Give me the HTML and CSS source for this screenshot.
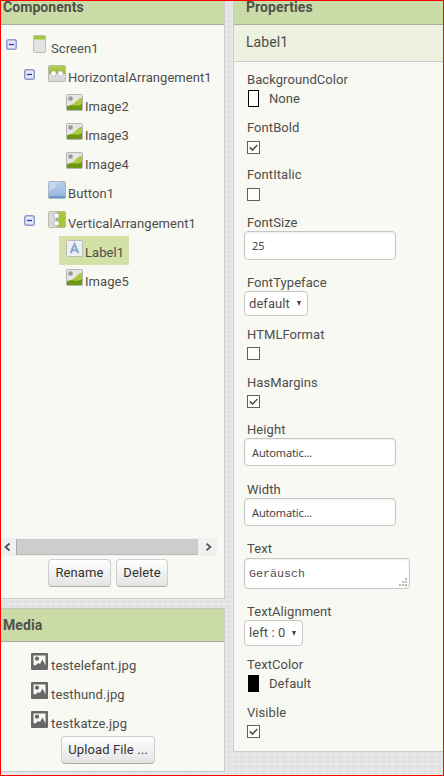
FILE: index.html
```html
<!DOCTYPE html>
<html lang="en">
<head>
<meta charset="utf-8">
<title>Designer</title>
<link rel="stylesheet" href="styles.css">
</head>
<body>
<svg class="defs" width="0" height="0">
  <defs>
    <linearGradient id="grey" x2="0" y2="1"><stop stop-color="#f4f4f4"/><stop offset="1" stop-color="#d5d5d5"/></linearGradient>
    <linearGradient id="green" x2="0" y2="1"><stop stop-color="#b0d050"/><stop offset="1" stop-color="#96bd31"/></linearGradient>
    <linearGradient id="blue" x2="0" y2="1"><stop stop-color="#b9cfea"/><stop offset="1" stop-color="#91b3dd"/></linearGradient>
    <symbol id="toggle" viewBox="0 0 11 11"><rect x=".75" y=".75" width="9.5" height="9.5" rx="2" fill="#e6e9fa" stroke="#8c99ca" stroke-width="1.5"/><path d="M3 5.500h5" stroke="#3030c0" stroke-width="1.300"/></symbol>
    <symbol id="screen" viewBox="0 0 13 18"><rect x=".5" y=".5" width="12" height="17" rx="1" fill="#e3e3e3" stroke="#bdbdbd"/><path d="M1 1h11v3.500H1z" fill="#a5c83c"/></symbol>
    <symbol id="horizontal" viewBox="0 0 18 17"><rect x=".5" y=".5" width="17" height="16" rx="1" fill="url(#grey)" stroke="#b9bcae"/><path d="M1 1h16v8H1z" fill="url(#green)"/><path d="M8 8.500h2" stroke="#aaa"/><rect x="3" y="6" width="5" height="5" rx="1.800" fill="#fff" stroke="#b4b8a6" stroke-width=".8"/><rect x="10" y="6" width="5" height="5" rx="1.800" fill="#fff" stroke="#b4b8a6" stroke-width=".8"/></symbol>
    <symbol id="vertical" viewBox="0 0 18 17"><rect x=".5" y=".5" width="17" height="16" rx="1" fill="#d9d9d9" stroke="#b9bcae"/><path d="M9 1h8v15H9z" fill="#a4c83a"/><path d="M8.500 7v3" stroke="#aaa"/><rect x="6" y="2.500" width="5" height="4.500" rx="1.300" fill="#fff" stroke="#aaa" stroke-width=".8"/><rect x="6" y="10" width="5" height="4.500" rx="1.300" fill="#fff" stroke="#aaa" stroke-width=".8"/></symbol>
    <symbol id="image" viewBox="0 0 17 17"><rect x=".5" y=".5" width="16" height="16" rx="1" fill="#e6e6e6" stroke="#b5b5b5"/><path d="M1 12Q7 11 10 7.500T16 3.500V16H1z" fill="#a8ca3e"/><path d="M1 12.500Q5 10.500 9 11.500T16 10V16H1z" fill="#6d9a12"/><circle cx="4.500" cy="4.500" r="2.300" fill="#999"/></symbol>
    <symbol id="button" viewBox="0 0 18 18"><rect x=".5" y=".5" width="17" height="17" rx="1" fill="url(#blue)" stroke="#a9b5c8"/><path d="M1 1h9Q9 8 1 10z" fill="#d8e5f5" opacity=".5"/><path d="M1 15h16v2H1z" fill="#7397c9"/></symbol>
    <symbol id="label" viewBox="0 0 17 17"><rect x=".5" y=".5" width="16" height="16" rx="1" fill="#efefef" stroke="#bcbcbc"/><path d="M4.700 13L8.500 4l3.800 9M6 10.300h5" fill="none" stroke="#88aad6" stroke-width="2"/></symbol>
    <symbol id="media" viewBox="0 0 17 17"><rect width="17" height="17" rx="1" fill="#686868"/><path d="M2.500 2.500h12v10l-3-6-2.500 4.500-2-1-2.500 2.500-2-.5z" fill="#f8f9f3"/><circle cx="6" cy="5.700" r="2.100" fill="#686868"/></symbol>
    <symbol id="tick" viewBox="0 0 13 13"><path d="M2.800 6.400l2.700 2.700 4.900-5.200" fill="none" stroke="#505050" stroke-width="1.500"/></symbol>
  </defs>
</svg>
<div class="app">
  <div class="left">
    <section class="panel components">
      <h2>Components</h2>
      <div class="tree">
        <div class="row l0"><svg class="toggle"><use href="#toggle"/></svg><span class="item"><svg class="screen"><use href="#screen"/></svg><span>Screen1</span></span></div>
        <div class="row l1"><svg class="toggle"><use href="#toggle"/></svg><span class="item"><svg class="wide"><use href="#horizontal"/></svg><span>HorizontalArrangement1</span></span></div>
        <div class="row l2"><span class="item"><svg><use href="#image"/></svg><span>Image2</span></span></div>
        <div class="row l2"><span class="item"><svg><use href="#image"/></svg><span>Image3</span></span></div>
        <div class="row l2"><span class="item"><svg><use href="#image"/></svg><span>Image4</span></span></div>
        <div class="row l1 leaf"><span class="item"><svg class="wide tall"><use href="#button"/></svg><span>Button1</span></span></div>
        <div class="row l1"><svg class="toggle"><use href="#toggle"/></svg><span class="item"><svg class="wide"><use href="#vertical"/></svg><span>VerticalArrangement1</span></span></div>
        <div class="row l2"><span class="item selected"><svg><use href="#label"/></svg><span>Label1</span></span></div>
        <div class="row l2"><span class="item"><svg><use href="#image"/></svg><span>Image5</span></span></div>
      </div>
      <div class="scrollbar"><svg class="arrow" viewBox="0 0 15 16"><path d="M8.500 4.500L4.500 8l4 3.500" /></svg><div class="thumb"></div><svg class="arrow end" viewBox="0 0 20 16"><path d="M9 4.500L13 8l-4 3.500" /></svg></div>
      <div class="actions"><button class="rename">Rename</button><button class="delete">Delete</button></div>
    </section>
    <section class="panel media">
      <h2>Media</h2>
      <div class="files">
        <div class="file"><svg><use href="#media"/></svg><span>testelefant.jpg</span></div>
        <div class="file"><svg><use href="#media"/></svg><span>testhund.jpg</span></div>
        <div class="file"><svg><use href="#media"/></svg><span>testkatze.jpg</span></div>
      </div>
      <button class="upload">Upload File ...</button>
    </section>
  </div>
  <section class="panel properties">
    <h2>Properties</h2>
    <div class="subject">Label1</div>
    <div class="props">
      <div class="prop h48"><label>BackgroundColor</label><div class="color"><i class="swatch"></i>None</div></div>
      <div class="prop h47"><label>FontBold</label><div class="check low"><svg><use href="#tick"/></svg></div></div>
      <div class="prop h48"><label>FontItalic</label><div class="check low"></div></div>
      <div class="prop h60"><label>FontSize</label><div class="field size">25</div></div>
      <div class="prop h52"><label>FontTypeface</label><div class="select">default<i class="caret"></i></div></div>
      <div class="prop h48"><label>HTMLFormat</label><div class="check"></div></div>
      <div class="prop h47"><label>HasMargins</label><div class="check"><svg><use href="#tick"/></svg></div></div>
      <div class="prop h60"><label>Height</label><div class="field">Automatic...</div></div>
      <div class="prop h59"><label>Width</label><div class="field">Automatic...</div></div>
      <div class="prop h63"><label>Text</label><div class="area">Geräusch<svg class="grip" viewBox="0 0 9 9"><path d="M6 0h2v2H6zM3 3h2v2H3zM6 3h2v2H6zM0 6h2v2H0zM3 6h2v2H3zM6 6h2v2H6z"/></svg></div></div>
      <div class="prop h53"><label>TextAlignment</label><div class="select align">left : 0<i class="caret"></i></div></div>
      <div class="prop h48"><label>TextColor</label><div class="color"><i class="swatch black"></i>Default</div></div>
      <div class="prop"><label>Visible</label><div class="check"><svg><use href="#tick"/></svg></div></div>
    </div>
  </section>
</div>
</body>
</html>
```
FILE: styles.css
```css
* { box-sizing: border-box; }
body {
  margin: 0;
  font: 13px/16px Roboto, sans-serif;
  letter-spacing: .07px;
  color: #4d4d4d;
}
.defs { display: block; }
svg { display: block; flex: none; }
.app {
  width: 444px;
  height: 776px;
  overflow: hidden;
  border: 1px solid #f00;
  display: flex;
  align-items: flex-start;
  gap: 8px;
  background:
    repeating-linear-gradient(90deg, rgba(255,255,255,.2) 0 1px, transparent 1px 3px, rgba(0,0,0,.015) 3px 4px, transparent 4px 7px),
    repeating-linear-gradient(0deg, rgba(255,255,255,.2) 0 1px, transparent 1px 3px, rgba(0,0,0,.015) 3px 4px, transparent 4px 5px),
    #e4e4e4;
}
.left { width: 224px; flex: none; }
.panel { background: #f8f9f3; border: 1px solid #ccc; border-left: 0; }
h2 {
  margin: 0;
  height: 33px;
  padding-left: 2px;
  font-size: 14px;
  line-height: 32px;
  font-weight: 700;
  color: #4f514b;
  background: #cbdba8;
  border-bottom: 1px solid #aaaea2;
}
.components { height: 598px; border-top: 0; }
.components h2, .properties h2 { height: 24px; line-height: 13px; }
.tree { height: 513px; padding-top: 7px; }
.row { display: flex; align-items: flex-start; height: 29.1px; }
.toggle { width: 11px; height: 11px; margin-top: 7px; }
.l1 .toggle { margin-top: 8px; }
.l0 { padding-left: 5px; }
.l1 { padding-left: 23px; }
.l1.leaf { padding-left: 47px; }
.l2 { padding-left: 58px; }
.item { display: flex; height: 29px; padding-top: 4px; }
.item svg { width: 17px; height: 17px; }
.item .wide { width: 18px; }
.item .tall { height: 18px; }
.item .screen { width: 13px; height: 18px; margin-right: 3px; }
.item span { margin: 5px 0 0 2px; }
.l0 .item { padding-left: 16px; padding-top: 3px; }
.l0 .item span { margin-top: 6px; }
.l1 .item { padding-left: 13px; }
.l1.leaf .item { padding-left: 0; }
.l1 .item span { margin-left: 2px; }
.l2 .item { padding-left: 7px; padding-right: 5px; }
.selected { width: 70px; background: #d3e0a6; }
.scrollbar { display: flex; width: 216px; height: 18px; padding: 1px 0; background: #f0f0f0; }
.thumb { width: 182px; background: #cdcdcd; border-left: 1px solid #aaa; border-bottom: 1px solid #bbb; }
.arrow { width: 15px; height: 16px; fill: none; stroke: #505050; stroke-width: 1.8; }
.arrow.end { width: 19px; }
.actions { display: flex; gap: 5px; padding: 3px 0 0 47px; }
button {
  display: block;
  height: 28px;
  padding: 0;
  font: 13px/26px Roboto, sans-serif;
  letter-spacing: .12px;
  color: #333;
  background: linear-gradient(#fff, #e4e4e4);
  border: 1px solid #ccc;
  border-bottom-color: #aaa;
  border-radius: 4px;
}
.rename { width: 63px; }
.delete { width: 52px; }
.media { height: 164px; margin-top: 9px; border-top-color: #c4c8bb; }
.files { padding: 11px 0 0 30px; }
.file { display: flex; gap: 3px; height: 29px; }
.file svg { width: 17px; height: 17px; }
.file span { margin-top: 5px; letter-spacing: .14px; }
.upload { width: 94px; margin: -4px 0 0 60px; }
.properties { width: 211px; height: 751px; flex: none; border-top: 0; border-right: 0; border-left: 1px solid #ccc; }
.properties h2 { padding-left: 12px; }
.subject {
  height: 37px;
  padding-left: 12px;
  font-size: 14px;
  line-height: 35px;
  background: #edf1df;
  border-bottom: 1px solid #ccc;
}
.props { padding: 10px 0 0 10px; }
label { display: block; height: 16px; padding-left: 3px; line-height: 16px; }
.h47 { height: 47px; }
.h48 { height: 48px; }
.h52 { height: 52px; }
.h53 { height: 53px; }
.h59 { height: 59px; }
.h60 { height: 60px; }
.h63 { height: 63px; }
.color { display: flex; gap: 10px; padding: 2px 0 0 4px; line-height: 18px; }
.swatch { width: 11px; height: 17px; background: #fff; border: 1px solid #000; }
.swatch.black { background: #000; }
.check { width: 13px; height: 13px; margin: 4px 0 0 3px; background: #fff; border: 1px solid #606060; }
.check.low { margin-top: 5px; }
.check svg { width: 13px; height: 13px; margin: -1px; }
.field, .select, .area { background: #fff; border: 1px solid #c6c6c6; border-radius: 4px; }
.field {
  width: 152px;
  height: 28px;
  padding-left: 7px;
  font: 11px/27px "Noto Sans", sans-serif;
  letter-spacing: -.15px;
  color: #444;
  box-shadow: inset 0 1px 2px #eee;
}
.field.size { height: 29px; }
.select { display: flex; align-items: center; justify-content: space-between; width: 64px; height: 25px; padding: 0 6px 0 4px; }
.select.align { width: 59px; height: 26px; }
.caret { border: 2.5px solid transparent; border-top: 5px solid #444; border-bottom: 0; }
.area {
  position: relative;
  width: 166px;
  height: 31px;
  margin-top: 1px;
  padding-left: 4px;
  font: 11.7px/30px "Liberation Mono", monospace;
  letter-spacing: 0;
  box-shadow: inset 0 1px 2px #eee;
}
.grip { position: absolute; right: 1px; bottom: 1px; width: 9px; height: 9px; fill: #b8b8b8; }
```
